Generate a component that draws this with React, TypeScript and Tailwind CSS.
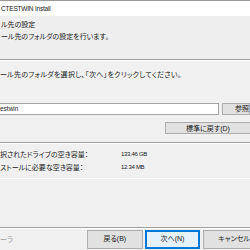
import React from "react";

const jp = "[font-family:'Liberation_Sans','Noto_Sans_CJK_JP',sans-serif] [font-feature-settings:'palt']";

export default function App() {
  return (
    <div className={`w-[250px] h-[250px] overflow-hidden bg-[#f0f0f0] text-[#1a1a1a] text-[7px] ${jp}`}>
      {/* title bar */}
      <div className="h-[16px] bg-white border-t border-[#9a9a9a] flex items-center pl-[1px]">
        <span className="text-[6.5px] text-[#222] tracking-[-0.2px]">CTESTWIN Install</span>
      </div>
      {/* header */}
      <div className="h-[43px] pt-[3px] pl-[1px] bg-[#eeeeee]">
        <div className="leading-[12px] whitespace-nowrap">ル先の設定</div>
        <div className="leading-[12px] whitespace-nowrap">ール先のフォルダの設定を行います。</div>
      </div>
      <div className="border-t border-[#a0a0a0] border-b border-b-white" />
      {/* body */}
      <div className="pt-[8px]">
        <div className="leading-[12px] whitespace-nowrap tracking-[0.3px]">ール先のフォルダを選択し、「次へ」をクリックしてください。</div>
        <div className="mt-[22px] flex items-center gap-[3px] h-[12px]">
          <div className="w-[227px] h-[12px] bg-white border border-[#a5a5a5] border-l-0 flex items-center">
            <span className="text-[6.5px] leading-none">estwin</span>
          </div>
          <div className="flex-1 h-[12px] bg-[#e1e1e1] border border-[#adadad] flex items-center pl-[12px] whitespace-nowrap">
            参照
          </div>
        </div>
        <div className="mt-[7px] flex justify-end">
          <div className="w-[85px] h-[12px] bg-[#e1e1e1] border border-[#adadad] border-r-0 flex items-center justify-center whitespace-nowrap leading-none">
            標準に戻す(D)
          </div>
        </div>
        <div className="mt-[8px] border-t border-[#a0a0a0] border-b border-b-white" />
        <div className="pt-[4px] leading-[13px]">
          <div className="flex whitespace-nowrap">
            <span className="w-[121px]">択されたドライブの空き容量：</span>
            <span className="text-[6px] tracking-[-0.3px]">133.46 GB</span>
          </div>
          <div className="flex whitespace-nowrap">
            <span className="w-[121px]">ストールに必要な空き容量：</span>
            <span className="text-[6px] tracking-[-0.3px]">12.34 MB</span>
          </div>
        </div>
        <div className="mt-[4px] border-b border-white" />
      </div>
      {/* footer */}
      <div className="mt-[48px] border-t border-[#a0a0a0] border-b border-b-white" />
      <div className="flex items-start mt-[1px]">
        <div className="w-[96px] pt-[5px] text-[#a0a0a0] whitespace-nowrap">ーラ</div>
        <div className="w-[61px] h-[19px] bg-[#e1e1e1] border border-[#adadad] flex items-center justify-center whitespace-nowrap">
          戻る(B)
        </div>
        <div className="ml-[2px] w-[61px] h-[19px] bg-[#e5f1fb] border-2 border-[#0078d7] flex items-center justify-center whitespace-nowrap">
          次へ(N)
        </div>
        <div className="ml-[3px] flex-1 h-[19px] bg-[#e1e1e1] border border-[#adadad] border-r-0 flex items-center pl-[14px] whitespace-nowrap">
          キャンセル
        </div>
      </div>
    </div>
  );
}
